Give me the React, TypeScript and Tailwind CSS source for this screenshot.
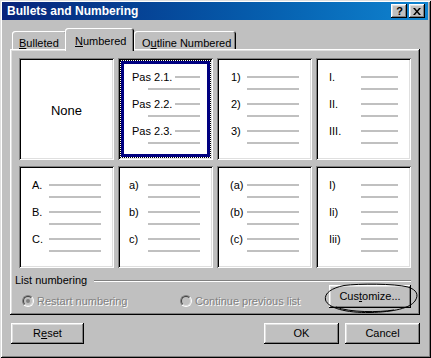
import { Fragment } from "react";

const ui = "font-['Liberation_Sans',Arial,sans-serif]";
const raised =
  "shadow-[inset_-1px_-1px_#000,inset_1px_1px_#fff,inset_-2px_-2px_#808080,inset_2px_2px_#dfdfdf]";
const sunken =
  "shadow-[inset_1px_1px_#808080,inset_-1px_-1px_#fff,inset_2px_2px_#000,inset_-2px_-2px_#dfdfdf]";
const disabledText = "text-[#808080] [text-shadow:1px_1px_0_#fff]";

interface Style {
  id: string;
  labels: string[];
  pad: string;
  roman?: boolean;
}

const topRow: Style[] = [
  { id: "num", labels: ["1)", "2)", "3)"], pad: "pl-[14px]" },
  { id: "roman", labels: ["I.", "II.", "III."], pad: "pl-[13px]", roman: true },
];

const bottomRow: Style[] = [
  { id: "alpha", labels: ["A.", "B.", "C."], pad: "pl-[13px]" },
  { id: "lower", labels: ["a)", "b)", "c)"], pad: "pl-[11px]" },
  { id: "paren", labels: ["(a)", "(b)", "(c)"], pad: "pl-[13px]" },
  { id: "iroman", labels: ["I)", "Ii)", "Iii)"], pad: "pl-[13px]", roman: true },
];

function Line({ roman }: { roman?: boolean }) {
  return <div className={`h-[2px] bg-[#c0c0c0] ${roman ? "w-[37px]" : "w-[52px]"}`} />;
}

function ListCell({ style }: { style: Style }) {
  return (
    <div className={`bg-white ${sunken} pt-[13px] pr-[13px] ${style.pad} flex flex-col gap-[3px]`}>
      {style.labels.map((l) => (
        <div key={l} className="flex flex-col">
          <div className="flex items-center justify-between h-[12px]">
            <span className="leading-[12px]">{l}</span>
            <Line roman={style.roman} />
          </div>
          <div className="flex items-center justify-end h-[12px]">
            <Line roman={style.roman} />
          </div>
        </div>
      ))}
    </div>
  );
}

function PasCell() {
  return (
    <div className={`bg-white ${sunken} p-[2px] flex`}>
      <div className="flex-1 flex border border-dotted border-black">
        <div className="flex-1 border-[3px] border-[#000080] pt-[7px] pl-[8px] pr-[7px] flex flex-col gap-[3px]">
          {["Pas 2.1.", "Pas 2.2.", "Pas 2.3."].map((l) => (
            <div key={l} className="flex flex-col">
              <div className="flex items-center h-[12px]">
                <span className="leading-[12px]">{l}</span>
                <div className="flex-1 ml-[3px] h-[2px] bg-[#c0c0c0]" />
              </div>
              <div className="flex items-center justify-end h-[12px]">
                <Line />
              </div>
            </div>
          ))}
        </div>
      </div>
    </div>
  );
}

function Radio({ label, checked }: { label: string; checked?: boolean }) {
  return (
    <div className="flex items-center gap-[3px]">
      <div className="w-[12px] h-[12px] rounded-full border border-t-[#808080] border-l-[#808080] border-b-white border-r-white bg-[#c0c0c0] flex items-center justify-center">
        <div className="w-[10px] h-[10px] rounded-full border border-t-[#404040] border-l-[#404040] border-b-[#dfdfdf] border-r-[#dfdfdf] flex items-center justify-center">
          {checked && <div className="w-[4px] h-[4px] rounded-full bg-[#808080]" />}
        </div>
      </div>
      <span className={disabledText}>{label}</span>
    </div>
  );
}

function Button({ children, className = "" }: { children: React.ReactNode; className?: string }) {
  return (
    <div className={`bg-[#c0c0c0] ${raised} flex items-center justify-center ${className}`}>
      {children}
    </div>
  );
}

export default function App() {
  return (
    <div
      className={`w-[431px] h-[358px] bg-[#c0c0c0] pt-[2px] pl-[2px] pr-[3px] flex flex-col text-[11px] text-black ${ui} shadow-[inset_1px_1px_#dfdfdf,inset_-1px_-1px_#000,inset_2px_2px_#fff,inset_-2px_-2px_#808080]`}
    >
      {/* title bar */}
      <div className="h-[18px] flex items-center bg-linear-to-r from-[#08237a] to-[#1084d0] pl-[5px] pr-[3px]">
        <span className="text-white font-bold text-[12px] leading-none">Bullets and Numbering</span>
        <div className="ml-auto flex gap-[2px]">
          <Button className="w-[16px] h-[14px]">
            <span className="font-bold text-[11px] leading-none pl-[1px]">?</span>
          </Button>
          <Button className="w-[16px] h-[14px]">
            <svg width="8" height="7" viewBox="0 0 8 7">
              <path d="M0 0h2l2 2.5L6 0h2L5 3.5 8 7H6L4 4.5 2 7H0l3-3.5z" fill="#000" />
            </svg>
          </Button>
        </div>
      </div>

      <div className="flex flex-col px-[8px]">
        {/* tabs */}
        <div className="mt-[8px] flex items-end h-[21px] pl-[2px]">
          <div className="w-[55px] h-[18px] pt-[4px] pl-[7px] rounded-t-[3px] shadow-[inset_1px_1px_#fff,inset_-1px_0_#000,inset_-2px_0_#808080]">
            <span className="underline underline-offset-[1px]">B</span>ulleted
          </div>
          <div className="relative -ml-[2px] w-[69px] h-[23px] -mb-[2px] pt-[5px] pl-[10px] bg-[#c0c0c0] rounded-t-[3px] shadow-[inset_1px_1px_#fff,inset_-1px_0_#000,inset_-2px_0_#808080]">
            <span className="underline underline-offset-[1px]">N</span>umbered
          </div>
          <div className="w-[102px] h-[18px] pt-[4px] pl-[8px] rounded-t-[3px] shadow-[inset_1px_1px_#fff,inset_-1px_0_#000,inset_-2px_0_#808080]">
            O<span className="underline underline-offset-[1px]">u</span>tline Numbered
          </div>
        </div>

        {/* tab panel */}
        <div className={`h-[266px] flex flex-col ${raised}`}>
          <div className="ml-[9px] mt-[9px] grid grid-cols-[repeat(4,95px)] grid-rows-[102px_102px] gap-x-[4px] gap-y-[6px]">
            <div className={`bg-white ${sunken} flex items-center justify-center pt-[3px] text-[13px]`}>None</div>
            <PasCell />
            {topRow.map((s) => (
              <ListCell key={s.id} style={s} />
            ))}
            {bottomRow.map((s) => (
              <Fragment key={s.id}>
                <ListCell style={s} />
              </Fragment>
            ))}
          </div>

          <div className="mt-[6px] flex items-center h-[13px] pl-[5px] pr-[9px]">
            <span>List numbering</span>
            <div className="flex-1 ml-[7px] border-t border-t-[#808080] border-b border-b-white" />
          </div>

          <div className="-mt-[2px] flex pl-[12px] pr-[9px]">
            <div className="mt-[8px] w-[158px]">
              <Radio label="Restart numbering" checked />
            </div>
            <div className="mt-[8px]">
              <Radio label="Continue previous list" />
            </div>
            <div className="relative ml-auto">
              <Button className="w-[82px] h-[23px]">
                <span>
                  Cus<span className="underline underline-offset-[1px]">t</span>omize...
                </span>
              </Button>
              <svg
                className="absolute left-[-5px] top-[-2px] pointer-events-none overflow-visible"
                width="94"
                height="31"
                viewBox="0 0 94 31"
              >
                <path
                  d="M20 2.5C35 0.5 70 0.5 84 4C93 7 95 12 91 18C86 25 70 29 46 29.5C22 30 4 25 1.5 17C0 10 8 5 20 2.5Z"
                  fill="none"
                  stroke="#000"
                  strokeWidth="1"
                />
                <path d="M12 24C25 29.5 55 29.5 70 27" fill="none" stroke="#000" strokeWidth="1" />
              </svg>
            </div>
          </div>
        </div>

        {/* dialog buttons */}
        <div className="mt-[8px] flex">
          <Button className="ml-[1px] w-[73px] h-[21px]">
            <span>
              R<span className="underline underline-offset-[1px]">e</span>set
            </span>
          </Button>
          <Button className="ml-auto w-[75px] h-[21px]">OK</Button>
          <Button className="ml-[6px] w-[75px] h-[21px]">Cancel</Button>
        </div>
      </div>
    </div>
  );
}
